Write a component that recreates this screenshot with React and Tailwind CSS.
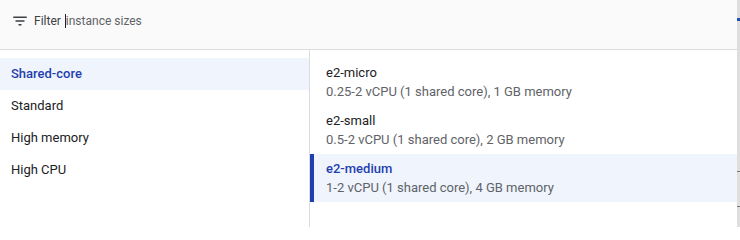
import React, { useState } from "react";

const families = ["Shared-core", "Standard", "High memory", "High CPU"];

const sizes = [
    { name: "e2-micro", desc: "0.25-2 vCPU (1 shared core), 1 GB memory" },
    { name: "e2-small", desc: "0.5-2 vCPU (1 shared core), 2 GB memory" },
    { name: "e2-medium", desc: "1-2 vCPU (1 shared core), 4 GB memory" },
];

function FilterIcon() {
    return (
        <svg width="18" height="18" viewBox="0 0 24 24" fill="#3c4043">
            <path d="M10 18h4v-2h-4v2zM3 6v2h18V6H3zm3 7h12v-2H6v2z" />
        </svg>
    );
}

export default function App() {
    const [family, setFamily] = useState("Shared-core");
    const [size, setSize] = useState("e2-medium");

    return (
        <div className="flex w-[740px] h-[227px] bg-white overflow-hidden text-[13px]" style={{ fontFamily: "Roboto, 'Noto Sans', sans-serif" }}>
            <div className="flex flex-col w-[737px] min-w-0">
                {/* filter bar */}
                <div className="h-[50px] shrink-0 flex items-center bg-[#fafafa] border-b border-[#dadce0] pl-[11px] pb-[7px] text-[12px]">
                    <FilterIcon />
                    <span className="ml-[5px] text-[#3c4043]">Filter</span>
                    <span className="ml-[4px] w-px h-[14px] bg-[#202124]" />
                    <span className="text-[#5f6368]">instance sizes</span>
                </div>

                <div className="flex flex-1 min-h-0">
                    {/* machine families */}
                    <div className="w-[310px] shrink-0 pt-[8px] border-r border-[#dadce0]">
                        {families.map((f) => (
                            <div
                                key={f}
                                onClick={() => setFamily(f)}
                                className={`h-[32px] flex items-center pl-[11px] cursor-pointer ${
                                    family === f ? "bg-[#eff4fd] text-[#1f3fae] font-medium" : "text-[#202124]"
                                }`}
                            >
                                {f}
                            </div>
                        ))}
                    </div>

                    {/* sizes */}
                    <div className="flex-1 pt-[8px]">
                        {sizes.map((s) => (
                            <div
                                key={s.name}
                                onClick={() => setSize(s.name)}
                                className={`h-[48px] flex flex-col justify-center border-l-4 pl-[12px] cursor-pointer ${
                                    size === s.name ? "bg-[#eff4fd] border-[#1f3fae]" : "border-transparent"
                                }`}
                            >
                                <div className={`leading-[19px] ${size === s.name ? "text-[#1f3fae] font-medium" : "text-[#202124]"}`}>
                                    {s.name}
                                </div>
                                <div className="leading-[19px] text-[#5f6368]">{s.desc}</div>
                            </div>
                        ))}
                    </div>
                </div>
            </div>

            {/* edge of next panel */}
            <div className="w-[3px] shrink-0 bg-[#dedede] flex flex-col">
                <div className="mt-[18px] h-[3px] bg-[#1f4fc0]" />
                <div className="mt-[150px] h-px bg-[#777]" />
                <div className="mt-[34px] h-px bg-[#777]" />
            </div>
        </div>
    );
}
